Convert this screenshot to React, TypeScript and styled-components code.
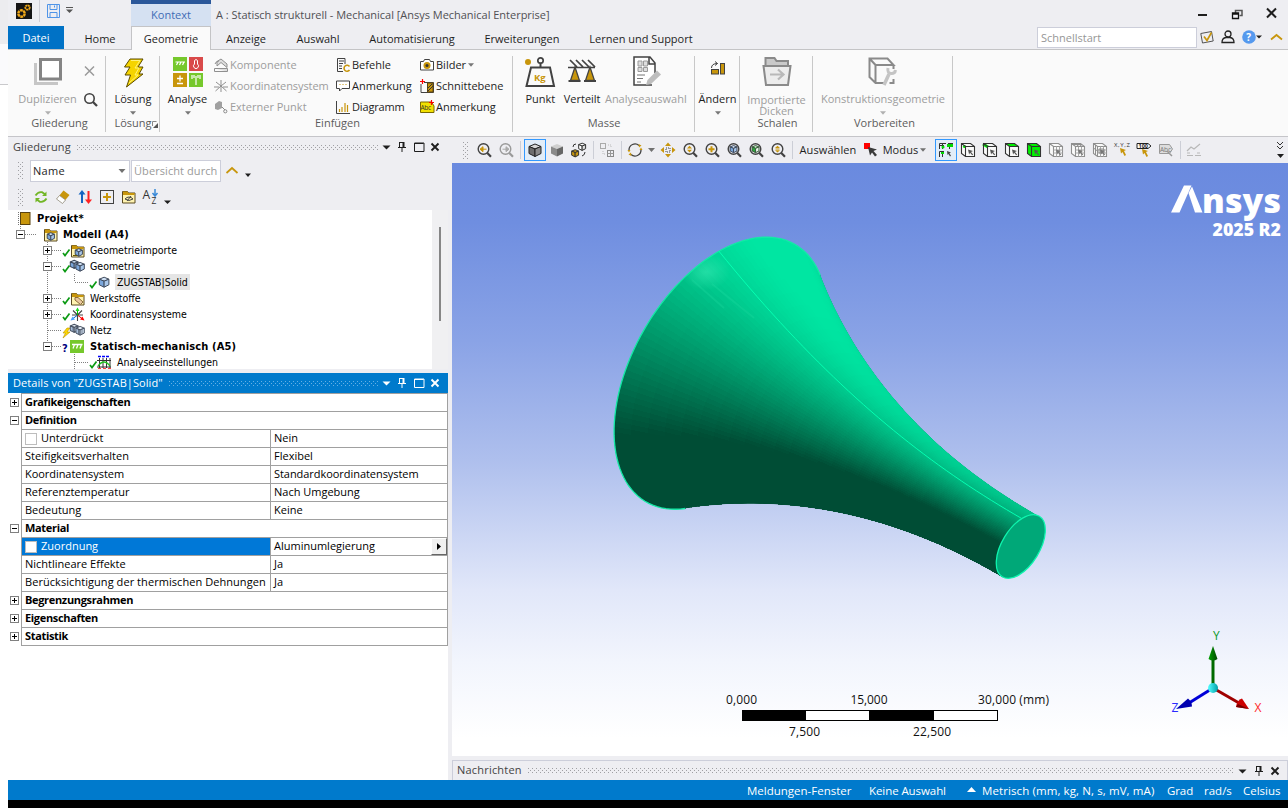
import React from "react";
import styled, { createGlobalStyle, css } from "styled-components";

const Global = createGlobalStyle`
  * { box-sizing: border-box; }
  body { margin: 0; background: #fff; font-family: "Open Sans", "Noto Sans", sans-serif; font-size: 11px; color: #1e1e1e; overflow: hidden; }
  svg { display: block; flex: none; }
`;

/* ---------- frame ---------- */
const Desktop = styled.div`display: flex; width: 1288px; height: 808px;`;
const Edge = styled.div`
  width: 8px; flex: none;
  background: linear-gradient(#ececef 0 44px, #fafafc 44px 84px, #c9c9cc 84px 85px, #fff 85px);
`;
const Window = styled.div`width: 1280px; display: flex; flex-direction: column; background: #eeeef2;`;

/* ---------- title bar ---------- */
const TitleBar = styled.header`display: flex; height: 26px; flex: none; align-items: flex-start;`;
const QuickAccess = styled.div`display: flex; width: 123px; height: 26px; padding: 3px 0 0 8px;`;
const QuickSep = styled.i`width: 1px; height: 22px; margin: -3px 6px 0 7px; background: #cfcfd6;`;
const ContextTab = styled.div`
  width: 80px; height: 26px; border-top: 4px solid #2a579a; background: #d5e1f2;
  color: #3f6cb5; text-align: center; line-height: 22px;
`;
const Caption = styled.div`flex: 1; padding-left: 5px; line-height: 30px; color: #505054; letter-spacing: -0.02px;`;
const WinButtons = styled.div`display: flex; width: 92px; padding: 7px 0 0 1px; gap: 20px;`;

/* ---------- ribbon tabs ---------- */
const TabBar = styled.nav`display: flex; height: 24px; flex: none; border-bottom: 1px solid #c4c4c6;`;
const Tab = styled.div<{ $w: number; $kind?: "file" | "active"; $pl?: number }>`
  width: ${p => p.$w}px; padding-left: ${p => p.$pl ?? 0}px; height: 23px; line-height: 25px; text-align: center; white-space: nowrap;
  ${p => p.$kind === "file" && css`background: #0072c6; color: #fff; line-height: 23px;`}
  ${p => p.$kind === "active" && css`height: 24px; background: #fafafa; border: 1px solid #c4c4c6; border-bottom: 0; line-height: 23px;`}
`;
const QuickLaunch = styled.div`
  display: flex; align-items: center; margin-left: auto; width: 251px; height: 22px; gap: 4px;
`;
const LaunchInput = styled.div`
  width: 160px; height: 21px; border: 1px solid #ccceda; background: #fff; color: #969696; padding-left: 3px; line-height: 19px;
`;
const LaunchIcons = styled.div`display: flex; gap: 7px; margin-left: -1px;`;

/* ---------- ribbon ---------- */
const Ribbon = styled.div`display: flex; height: 86px; flex: none; background: #fafafa; padding: 4px 0 2px;`;
const Group = styled.section<{ $w: number }>`
  width: ${p => p.$w}px; height: 76px; margin-top: 2px; border-right: 1px solid #c8c8c8; display: flex; flex-direction: column;
`;
const GroupBody = styled.div`display: flex; height: 60px; flex: none; align-items: flex-start;`;
const GroupName = styled.div<{ $dx?: number }>`
  flex: 1; text-align: center; line-height: 14px; color: #5c5c5c; white-space: nowrap; padding-left: ${p => p.$dx ?? 0}px;
  display: flex; justify-content: center;
`;
const Big = styled.div<{ $w: number; $off?: boolean; $multi?: boolean }>`
  width: ${p => p.$w}px; display: flex; flex-direction: column; align-items: center; color: ${p => (p.$off ? "#9d9d9d" : "#1e1e1e")};
  text-align: center; white-space: pre; line-height: ${p => (p.$multi ? 11 : 14)}px; padding-left: 1px;
  > svg:first-child { margin-bottom: ${p => (p.$multi ? 6 : 4)}px; }
  > svg + svg { margin-top: 5px; }
`;
const Column = styled.div<{ $w: number }>`width: ${p => p.$w}px; margin-top: -2px; flex: none;`;
const Small = styled.div<{ $off?: boolean; $ls?: number }>`
  height: 21px; display: flex; align-items: center; gap: 2px; white-space: nowrap; color: ${p => (p.$off ? "#9d9d9d" : "#1e1e1e")};
  letter-spacing: ${p => p.$ls ?? 0}px;
`;
const ToolStack = styled.div`width: 16px; display: flex; flex-direction: column; gap: 14px; padding-top: 8px; margin-left: -3px;`;

/* ---------- panels ---------- */
const Work = styled.main`flex: 1; display: flex; gap: 4px; border-top: 1px solid #c5c5c9; min-height: 0;`;
const Left = styled.div`width: 440px; display: flex; flex-direction: column; background: #fff;`;
const Right = styled.div`width: 836px; display: flex; flex-direction: column;`;
const PanelHead = styled.div<{ $active?: boolean; $line?: boolean }>`
  display: flex; align-items: center; height: 20px; flex: none; padding: 0 5px;
  background: ${p => (p.$active ? "#007acc" : "#eeeef2")}; color: ${p => (p.$active ? "#fff" : "#444")};
  ${p => p.$line && css`border: 1px solid #ccceda; border-bottom: 0; padding: 0 4px;`}
`;
const HeadText = styled.span<{ $ls?: number }>`margin-right: 6px; padding-bottom: 2px; white-space: nowrap; letter-spacing: ${p => p.$ls ?? 0}px;`;
const HeadIcons = styled.div`display: flex; gap: 0.3px;`;
const OutlineBar = styled.div<{ $h: number }>`display: flex; align-items: center; height: ${p => p.$h}px; flex: none; background: #eeeef2; padding-left: 10px;`;
const Combo = styled.div`
  display: flex; align-items: center; justify-content: space-between; width: 100px; height: 22px; margin-left: 7px;
  border: 1px solid #ccceda; background: #fff; padding: 0 3px 0 2px; letter-spacing: 0.3px;
`;
const Search = styled.div`
  width: 90px; height: 22px; margin-left: 1px; border: 1px solid #ccceda; background: #fff; color: #9a9a9a;
  line-height: 20px; padding-left: 2px; white-space: nowrap; letter-spacing: 0.08px;
`;
const OutlineIcons = styled.div`display: flex; gap: 6px; margin-left: 10px;`;

/* ---------- outline tree ---------- */
const TreeWrap = styled.div`display: flex; height: 159px; flex: none; background: #f0f0f2; overflow: hidden;`;
const Tree = styled.div`position: relative; width: 424px; background: #fff; font-family: "DejaVu Sans Condensed", "DejaVu Sans", sans-serif; font-stretch: condensed; font-size: 10.5px; color: #000;`;
const TreeLines = styled.svg`position: absolute; left: 0; top: 0;`;
const TreeRow = styled.div<{ $level: number; $bold?: boolean }>`
  position: relative; display: flex; align-items: center; height: 16px; padding-left: ${p => (p.$level ? p.$level * 27 - 19 : 9)}px;
  white-space: nowrap;
  ${p => p.$bold && css`font-weight: 700; font-size: 11px; letter-spacing: 0.16px;`}
`;
const ExpSlot = styled.span`width: 19px; flex: none; padding-top: 1px;`;
const MarkSlot = styled.span`width: 8px; flex: none; padding-top: 5px; font-weight: 700; font-size: 11px; line-height: 11px; color: #00007f;`;
const NodeIcon = styled.span`width: 15px; flex: none;`;
const NodeText = styled.span<{ $sel?: boolean; $bold?: boolean }>`
  margin-left: 3px; padding: ${p => (p.$bold ? 1 : 0)}px 2px 0; line-height: 16px; ${p => p.$sel && css`background: #e5e5e5;`}
`;
const Track = styled.div`width: 16px; padding: 17px 0 0 7px;`;
const Thumb = styled.div`width: 2px; height: 94px; background: #868686;`;
const Gap = styled.div`height: 4px; flex: none; background: #eeeef2;`;

/* ---------- details grid ---------- */
const Grid = styled.div`display: flex; flex-direction: column; color: #000;`;
const GridRow = styled.div`display: flex; height: 18px;`;
const Gutter = styled.div`width: 13px; display: flex; align-items: center; justify-content: center; padding-top: 1px;`;
const Cell = styled.div<{ $w: number; $head?: boolean; $sel?: boolean; $ls?: number }>`
  width: ${p => p.$w}px; height: 19px; border: 1px solid #a0a0a0; margin-right: -1px; flex: none; display: flex; align-items: center;
  padding: 0 0 2px 3px; line-height: 15px; white-space: nowrap; letter-spacing: ${p => p.$ls ?? 0}px;
  ${p => p.$head && css`font-weight: 700; letter-spacing: -0.33px;`}
  ${p => p.$sel && css`background: #0078d7; color: #fff;`}
`;
const Check = styled.i`width: 12px; height: 12px; border: 1px solid #bdbdbd; background: #fff; margin: 2px 4px 0 0;`;
const Flyout = styled.button`
  margin: 2px 0 0 auto; width: 16px; height: 17px; border: 1px solid #fff; border-right-color: #666; border-bottom-color: #666; background: #f0f0f0; padding: 0 0 0 5px;
`;

/* ---------- graphics toolbar ---------- */
const ViewBar = styled.div`display: flex; height: 26px; flex: none; align-items: center; padding-left: 11px; background: #eeeef2;`;
const Tool = styled.div<{ $on?: boolean }>`
  width: 22px; height: 22px; display: grid; place-items: center; ${p => p.$on && css`border: 1px solid #3399ff; background: #e2edf8;`}
`;
const Sep = styled.i<{ $w?: number }>`width: ${p => p.$w ?? 6}px; height: 18px; background: linear-gradient(#ccced6, #ccced6) 3px 0 / 1px 100% no-repeat;`;
const BarText = styled.span<{ $w: number }>`width: ${p => p.$w}px; text-align: center; white-space: nowrap; letter-spacing: 0.1px; padding-bottom: 1px;`;
const Overflow = styled.div`margin-left: auto; width: 16px; display: flex; flex-direction: column; align-items: center; gap: 4px;`;
const Space = styled.i<{ $w: number }>`width: ${p => p.$w}px; flex: none;`;
const Viewport = styled.div`
  height: 593px; flex: none;
  background: linear-gradient(#6a8adf 0, #6f8ee0 10%, #8aa3e6 30%, #aebfed 50%, #e1e7f9 72%, #f2f5fd 84%, #fff 97%);
`;

/* ---------- status bar ---------- */
const Status = styled.footer`display: flex; align-items: center; justify-content: flex-end; height: 20px; flex: none; background: #007acc; color: #fff; padding: 0 8px 0 0; font-size: 11.5px;`;
const StatusItem = styled.span<{ $w: number; $ml: number; $ls?: number }>`width: ${p => p.$w}px; margin-left: ${p => p.$ml}px; white-space: nowrap; letter-spacing: ${p => p.$ls ?? 0}px;`;
const Bottom = styled.div`height: 8px; flex: none; background: #000;`;

/* ---------- shared drawings ---------- */
const Down = ({ c = "#1e1e1e", w = 7 }: { c?: string; w?: number }) => (
  <svg width={w} height="4" viewBox="0 0 7 4"><path d="M0 0h7L3.500 4z" fill={c} /></svg>
);
const DotStrip = styled.svg<{ $grow: boolean }>`${p => p.$grow && css`flex: 1;`}`;
const Dots = ({ w, h = 5, c = "#a0a0a4" }: { w?: number; h?: number; c?: string }) => {
  const id = React.useId();
  return (
    <DotStrip $grow={!w} width={w ?? "100%"} height={h} shapeRendering="crispEdges">
      <defs><pattern id={id} width="4" height="4" patternUnits="userSpaceOnUse">
        <rect width="1" height="1" fill={c} /><rect x="2" y="2" width="1" height="1" fill={c} />
      </pattern></defs>
      <rect width="100%" height={h} fill={`url(#${id})`} />
    </DotStrip>
  );
};
const Svg = ({ s = 16, w, h, children }: { s?: number; w?: number; h?: number; children: React.ReactNode }) => (
  <svg width={w ?? s} height={h ?? s} viewBox={`0 0 ${w ?? s} ${h ?? s}`} fill="none" overflow="visible">{children}</svg>
);
const GOLD = "#c8960c";
const INK = "#424242";

const PanelButtons = ({ c, square = true }: { c: string; square?: boolean }) => (
  <HeadIcons>
    <Svg><path d="M4.500 6.500h8l-4 4z" fill={c} /></Svg>
    <Svg><path d="M5.500 3v5.500M5 3.500h5M4 8.500h8M8 9v4" stroke={c} /><path d="M9.500 3v5.500" stroke={c} strokeWidth="2" /></Svg>
    {square && <Svg><path d="M3.500 4h9.500v8.500H3.500zM3.500 4.500h9" stroke={c} /></Svg>}
    <Svg><path d="M4.500 4.500l7 7M11.500 4.500l-7 7" stroke={c} strokeWidth="1.900" /></Svg>
  </HeadIcons>
);

const Box3 = ({ top, left, right, stroke, x = 0, y = 0, k = 1 }: { top: string; left: string; right: string; stroke: string; x?: number; y?: number; k?: number }) => (
  <g transform={`translate(${x} ${y}) scale(${k})`} stroke={stroke} strokeLinejoin="round" strokeWidth={1 / k}>
    <path d="M2 4.500L8 2l6 2.500-6 2.500z" fill={top} /><path d="M2 4.500L8 7v7.500L2 11.500z" fill={left} /><path d="M14 4.500L8 7v7.500l6-3z" fill={right} />
  </g>
);
const BlueBox = ({ x = 0, y = 0, k = 1 }) => <Box3 top="#cfe0f4" left="#7ba7dc" right="#a9c7ea" stroke="#3f4a5c" x={x} y={y} k={k} />;
const FolderBase = () => (
  <g><path d="M1.500 2.500h5l1 1.500h6.500v10h-12.500z" fill="#fff3b0" stroke="#5a4a20" /><path d="M2 2.500h4.500l1 1.500h6v2H2z" fill={GOLD} /></g>
);

const Magnifier = ({ c = INK, children }: { c?: string; children?: React.ReactNode }) => (
  <Svg><g transform="translate(.5 .2)"><circle cx="7" cy="6.800" r="5.300" stroke={c} strokeWidth="1.400" /><path d="M10.800 10.800l3.700 3.700" stroke={c} strokeWidth="2.200" />{children}</g></Svg>
);

const SelectCube = ({ face, mesh, off }: { face?: "dot" | "edge" | "top" | "all"; mesh?: number; off?: boolean }) => {
  const c = off ? "#8f8f8f" : "#333";
  const g = "#00f000";
  return (
    <Svg>
      <path d="M1.500 1.500h9l4 3v10h-9l-4-3z" fill={face === "all" ? g : "#fafafa"} />
      {face === "top" && <path d="M1.500 1.500h9l4 3h-9z" fill={g} />}
      {face === "edge" && <path d="M1 2l5 3" stroke={g} strokeWidth="3" />}
      {face === "dot" && <circle cx="4.500" cy="4.500" r="1.600" fill={g} />}
      <path d="M1.500 1.500h9l4 3v10h-9l-4-3zM1.500 1.500l4 3h9M5.500 4.500v10" stroke={c} strokeWidth="1.100" />
      {off && <path d="M8.500 4.500v10M11.500 4.500v10M5.500 8h9M5.500 11h9" stroke="#a8a8a8" />}
      {mesh === 2 && <path d="M3 2.500h9M5 1.500l4 3M8 1.500l4 3" stroke={c} />}
      {mesh === 3 && <path d="M3.500 3v10M1.500 6l4 3M7 7h5v4H7z" stroke={c} />}
      <path d="M8 7.500l5 1.500-2 1 2.200 2.500-1 .8-2.100-2.500-1 1.700z" fill={off ? "#777" : "#555"} />
    </Svg>
  );
};

const Expander = ({ open, c = "#808080" }: { open?: boolean; c?: string }) => (
  <Svg s={9}><rect x=".5" y=".5" width="8" height="8" fill="#fff" stroke={c} /><path d={open ? "M2 4.500h5" : "M2 4.500h5M4.500 2v5"} stroke="#000" /></Svg>
);
const Tick = () => <Svg w={9} h={9}><path d="M1 5l2 2.500L7.500 1.500" stroke="#0c9a14" strokeWidth="1.700" /></Svg>;
const Bolt = () => <Svg w={9} h={10}><path d="M5 0L1 5h2.500L1 10l7-6H5l3-4z" fill="#ffd800" stroke="#b89000" strokeWidth=".6" /></Svg>;

/* ---------- tree icons ---------- */
const treeIcons: Record<string, React.ReactNode> = {
  project: <Svg w={15} h={15}><rect x="3.500" y="1.500" width="9.500" height="12" fill={GOLD} stroke="#5a4310" /><path d="M1.500 1v13" stroke="#777" strokeDasharray="1 1" /></Svg>,
  model: <Svg w={15} h={15}><FolderBase /><BlueBox x={3} y={4.500} k={0.600} /></Svg>,
  imports: <Svg w={15} h={15}><FolderBase /><BlueBox x={4} y={4.500} k={0.600} /><path d="M3 12.500h4" stroke="#6a5a00" /></Svg>,
  geometry: <Svg w={15} h={15}><BlueBox x={-1} y={0} k={0.650} /><BlueBox x={4.500} y={2} k={0.700} /></Svg>,
  solid: <Svg w={15} h={15}><BlueBox x={0.700} y={0.600} k={0.800} /></Svg>,
  material: <Svg w={15} h={15}><FolderBase /><path d="M5 6.500h3l5 4.500-2.500 2.500L5 9z" fill="#eac9a0" stroke="#8a6a3a" /></Svg>,
  csys: (
    <Svg w={15} h={15}>
      <path d="M7.500 8L3 3.500M7.500 8L12 3.500M7.500 8v6M7.500 8H2M7.500 8H13" stroke="#444" strokeWidth="1.100" />
      <path d="M7.500 8V3" stroke="#0b0" /><path d="M5.500 4h4l-2-3.500z" fill="#1fdd1f" />
      <path d="M8 8.500l4 3" stroke="#e00" /><path d="M10 12.500l4.500 1-2-4z" fill="#f00" />
      <path d="M7 8.500l-4 3" stroke="#06c" /><path d="M5 12.500l-4.500 1 2-4z" fill="#4aa3ff" />
    </Svg>
  ),
  mesh: <Svg w={15} h={15}><Box3 top="#e6eef8" left="#a9c0dd" right="#d0dff0" stroke="#4a5464" x={-1} y={0} k={0.650} /><Box3 top="#e6eef8" left="#a9c0dd" right="#d0dff0" stroke="#4a5464" x={4.500} y={2} k={0.700} /><path d="M3 3v5M8.500 6v5M12 6v5" stroke="#4a5464" strokeWidth=".7" /></Svg>,
  static: <Svg w={15} h={15}><rect x="0" y="1" width="14" height="13" fill="#76c82c" /><path d="M2 5.500h10.500M4.500 5.500L3 9.500M8 5.500L6.500 9.500M11.500 5.500L10 9.500" stroke="#fff" strokeWidth="1.300" /></Svg>,
  settings: <Svg w={15} h={15}><path d="M2.500 3v10M6 3v10M9.500 3v10M13 3v10M0 5.500h14M0 12h14" stroke="#333" /><path d="M1 1.500h3M5 1.500h3M9 1.500h3" stroke="#00f" strokeWidth="1.500" /><path d="M1 14h3M6 14h3M11 14h3" stroke="red" strokeWidth="1.500" /><path d="M1 11q6-8 12 0" stroke="#1fc01f" strokeWidth="1.300" /></Svg>,
};
type Node = { t: string; l: number; i: string; e?: "open" | "shut"; m?: React.ReactNode; b?: boolean; s?: boolean };
const nodes: Node[] = [
  { t: "Projekt*", l: 0, i: "project", b: true },
  { t: "Modell (A4)", l: 1, i: "model", e: "open", b: true },
  { t: "Geometrieimporte", l: 2, i: "imports", e: "shut", m: <Tick /> },
  { t: "Geometrie", l: 2, i: "geometry", e: "open", m: <Tick /> },
  { t: "ZUGSTAB|Solid", l: 3, i: "solid", m: <Tick />, s: true },
  { t: "Werkstoffe", l: 2, i: "material", e: "shut", m: <Tick /> },
  { t: "Koordinatensysteme", l: 2, i: "csys", e: "shut", m: <Tick /> },
  { t: "Netz", l: 2, i: "mesh", m: <Bolt /> },
  { t: "Statisch-mechanisch (A5)", l: 2, i: "static", e: "open", m: "?", b: true },
  { t: "Analyseeinstellungen", l: 3, i: "settings", m: <Tick /> },
];

/* ---------- details data ---------- */
type Detail = { h?: string; open?: boolean; k?: string; v?: string; box?: boolean; sel?: boolean; ls?: number };
const details: Detail[] = [
  { h: "Grafikeigenschaften" },
  { h: "Definition", open: true },
  { k: "Unterdrückt", v: "Nein", box: true },
  { k: "Steifigkeitsverhalten", v: "Flexibel" },
  { k: "Koordinatensystem", v: "Standardkoordinatensystem", ls: -0.05 },
  { k: "Referenztemperatur", v: "Nach Umgebung" },
  { k: "Bedeutung", v: "Keine" },
  { h: "Material", open: true },
  { k: "Zuordnung", v: "Aluminumlegierung", box: true, sel: true },
  { k: "Nichtlineare Effekte", v: "Ja" },
  { k: "Berücksichtigung der thermischen Dehnungen", v: "Ja", ls: 0.06 },
  { h: "Begrenzungsrahmen" },
  { h: "Eigenschaften" },
  { h: "Statistik" },
];

/* ---------- solid body: flared round bar seen at an angle ---------- */
type P = [number, number];
const LEN = 349.5;
const AXIS: P = [0.8656, 0.5007];
const NORMAL: P = [0.5007, -0.8656];
const radius = (t: number) => 35.5 + 113.2 * Math.pow(1 - t, 2.2);
const slope = (t: number) => 0.7126 * Math.pow(1 - t, 1.2);
const squash = (t: number) => 0.592 - 0.062 * t;
const at = (t: number, a: number): P => {
  const r = radius(t);
  const u = 3 * (1 - t) + t * LEN + r * squash(t) * Math.sin(a), v = r * Math.cos(a);
  return [718 + u * AXIS[0] + v * NORMAL[0], 371.7 + u * AXIS[1] + v * NORMAL[1]];
};
const contact = (t: number) => Math.asin(squash(t) * slope(t));
const line = (pts: P[]) => pts.map(p => `${p[0].toFixed(2)} ${p[1].toFixed(2)}`).join("L");
const steps = (n: number) => Array.from({ length: n + 1 }, (_, i) => i / n);
const c0 = contact(0);
const rim = steps(80).map(f => at(0, -Math.PI - c0 + f * (Math.PI + 2 * c0)));
const upper = steps(50).map(t => at(t, contact(t)));
const lower = steps(50).map(t => at(1 - t, Math.PI - contact(1 - t)));
const seam = steps(40).map(t => at(t, -0.789));
const outline = "M" + line([...rim, ...upper, ...lower]) + "z";

const facets = (() => {
  const NT = 28, NA = 96, a0 = 0.5, a1 = -Math.PI - 0.5;
  const out: { d: string; c: string; k: number }[] = [];
  for (let j = 0; j < NA; j++) {
    const a = a0 + ((a1 - a0) * j) / NA, b = a0 + ((a1 - a0) * (j + 1)) / NA, m = (a + b) / 2;
    for (let i = 0; i < NT; i++) {
      const t = i === 0 ? -0.02 : i / NT, t2 = (i + 1) / NT, tm = (i + 0.5) / NT;
      const q = 0.848 * 0.727 * Math.pow(1 - tm, 1.2);
      const dot = (0.72 * Math.cos(m) - 0.14 * Math.sin(m) + 0.68 * q) / Math.sqrt(1 + q * q);
      const s = Math.max(0, Math.min(1, dot * 1.05));
      out.push({
        d: "M" + line([at(t, a), at(t2, a), at(t2, b), at(t, b)]) + "z",
        c: `rgb(0,${Math.round(77 + 153 * s)},${Math.round(53 + 109 * s)})`,
        k: Math.abs(m + Math.PI / 2),
      });
    }
  }
  return out.sort((x, y) => y.k - x.k);
})();

const Scene = () => (
  <svg width="836" height="593" viewBox="452 163 836 593" fontFamily='"Open Sans", "Noto Sans", sans-serif'>
    <defs>
      <clipPath id="body"><path d={outline} /></clipPath>
      <radialGradient id="glow"><stop offset="0" stopColor="#5ffccb" stopOpacity=".35" /><stop offset="1" stopColor="#5ffccb" stopOpacity="0" /></radialGradient>
      <linearGradient id="ball"><stop offset="0" stopColor="#5ff" /><stop offset="1" stopColor="#00a0a8" /></linearGradient>
      <linearGradient id="ygrad"><stop offset="0" stopColor="#00a000" /><stop offset="1" stopColor="#004800" /></linearGradient>
    </defs>
    <g clipPath="url(#body)">
      <path d={outline} fill="#004d35" />
      <path d={"M" + line([...upper, ...[...seam].reverse()]) + "z"} fill="#00c48c" stroke="#00c48c" strokeWidth="4" />
      <g shapeRendering="crispEdges">{facets.map((f, i) => <path key={i} d={f.d} fill={f.c} />)}</g>
      <ellipse cx="706" cy="272" rx="24" ry="18" fill="url(#glow)" />
      <path d="M692 280l32 28M712 284l42 34" stroke="#3df0b8" strokeOpacity=".14" strokeWidth="2" />
    </g>
    <path d={"M" + line(rim)} fill="none" stroke="#14eaa6" strokeWidth="1.300" />
    <path d={"M" + line(seam)} fill="none" stroke="#05ffb2" strokeWidth="1" />
    <ellipse cx="1020.800" cy="546.500" rx="35.500" ry="18.800" transform="rotate(-58.5 1020.8 546.5)" fill="#00a878" stroke="#0ef5ae" strokeWidth="1.300" />

    <path d="M1171 212.500L1184 185.500h7.500L1179.500 212.500z" fill="#fff" />
    <path d="M1188.500 193L1192 186.500l10.500 26h-7.500z" fill="#fff" />
    <text x="1202" y="212.500" fontSize="34" fontWeight="800" fill="#fff" textLength="79">nsys</text>
    <text x="1212.500" y="236" fontSize="17" fontWeight="800" fill="#fff" textLength="68.500" lengthAdjust="spacingAndGlyphs">2025 R2</text>

    <g fontSize="12" fill="#111">
      <text x="726" y="704" textLength="31">0,000</text><text x="850.500" y="704" textLength="37">15,000</text><text x="978" y="704" textLength="71">30,000 (mm)</text>
      <text x="789" y="736" textLength="31">7,500</text><text x="913" y="736" textLength="38">22,500</text>
    </g>
    <rect x="742.500" y="710.500" width="255" height="10" fill="#fff" stroke="#000" />
    <rect x="742" y="710" width="64" height="11" /><rect x="869" y="710" width="65" height="11" />

    <path d="M1213 688V656" stroke="#006a00" strokeWidth="3" /><path d="M1208.500 659L1213 646l4.500 13q-4.500 3-9 0z" fill="url(#ygrad)" />
    <path d="M1213 688l26 15" stroke="#a00000" strokeWidth="3" /><path d="M1249 709l-13-2q1-7 6-8.500z" fill="#c00" /><path d="M1249 709l-13-2 2-3z" fill="#700" />
    <path d="M1213 688l-24 15" stroke="#0000d8" strokeWidth="3" /><path d="M1176 709l12-10.500q4 3 4 8z" fill="#0000b0" />
    <circle cx="1213" cy="688" r="5" fill="url(#ball)" />
    <text x="1213" y="640" fontSize="12" fill="#0a9a2a">Y</text><text x="1254.500" y="712" fontSize="12" fill="#ff2a2a">X</text><text x="1171.500" y="712" fontSize="12" fill="#2a2aff">Z</text>
  </svg>
);

/* ---------- ribbon icons ---------- */
const LaunchBolt = () => (
  <Svg w={32} h={32}><path d="M13 3h13l-5 8h5l-4 7h4L9.500 31l4-12H8l5-8H7.500z" fill="#f5d400" stroke="#5a4a00" strokeWidth="1" /><path d="M14 4.500h9l-5 7.500h4l-4 7h3l-9 8" stroke="#fff27a" /></Svg>
);
const DuplicateIcon = () => (
  <Svg w={32} h={32}><path d="M3.500 7v20.500H26" stroke="#c6c6c6" strokeWidth="3" /><rect x="8.500" y="3.500" width="20" height="19.500" fill="#fff" stroke="#848484" strokeWidth="3" /></Svg>
);
const AnalysisIcon = () => (
  <Svg w={32} h={32}>
    <rect x="1" y="1" width="14" height="14" fill="#76c82c" /><path d="M3.500 6h9.500M6 6l-1.500 3M9 6l-1.500 3M12 6l-1.500 3" stroke="#fff" strokeWidth="1.200" />
    <rect x="17" y="1" width="14" height="14" fill="#d94a4a" /><path d="M22.500 8V4.500q1.500-2 3 0V8a2.500 2.500 0 1 1-3 0z" stroke="#fff" />
    <rect x="1" y="17" width="14" height="14" fill={GOLD} /><path d="M8 19.500v6M5 22.500h6M5 27.500h6" stroke="#fff" strokeWidth="1.300" />
    <rect x="17" y="17" width="14" height="14" fill="#76c82c" /><path d="M24 20v9M20 19v4M22 19v3M26 19v3M28 19v4" stroke="#fff" strokeWidth="1.200" />
  </Svg>
);
const PointMass = () => (
  <Svg w={32} h={32}><circle cx="4" cy="6" r="3" fill={GOLD} /><circle cx="16.500" cy="4.500" r="2.700" stroke={INK} strokeWidth="1.700" /><path d="M16.500 7v4M7 11.500h19L30 30H2.500z" stroke={INK} strokeWidth="2" /><text x="10" y="24.500" fontSize="9.500" fontWeight="700" fill={GOLD}>Kg</text></Svg>
);
const Distributed = () => (
  <Svg w={32} h={32}><path d="M2 11.500h27M4 4l7 7M10 4l7 7M16 4l7 7M22 4l7 7" stroke={INK} strokeWidth="1.700" /><path d="M9 11L4.500 24.500h9zM24 11L19.500 24.500h9z" fill={GOLD} stroke={INK} strokeWidth="1.300" /><path d="M2.500 25h12M18 25h12" stroke={INK} strokeWidth="1.800" /></Svg>
);
const SelectionDoc = () => (
  <Svg w={32} h={32}><path d="M22 29H4V1h16l5 6v10M19 1v7h6" stroke={INK} strokeWidth="1.500" fill="#fff" /><path d="M8 5h4v5H8zM13.500 5h4v5h-4zM8 11.500h4v4H8zM13.500 11.500h4v4h-4z" stroke="#9a9a9a" fill="#ddd" /><path d="M7 19h8M7 22.500h6M7 26h4" stroke="#777" /><path d="M16 29l1.500-5L27 14.500l4 4L21 28z" fill="#bdbdbd" /></Svg>
);
const EditIcon = () => (
  <Svg w={32} h={32}><rect x="9.500" y="13.500" width="7" height="4.500" fill={GOLD} stroke={INK} /><rect x="18.500" y="7.500" width="4" height="10.500" fill={GOLD} stroke={INK} /><path d="M9.500 12q0-4.500 6-4.500M13 5.500l2.500 2-2.500 2" stroke={INK} /></Svg>
);
const ImportFolder = () => (
  <Svg w={32} h={32}><path d="M4.500 9V2h9l2 3H27v4" stroke="#8a8a8a" strokeWidth="2" fill="#c9c9c9" /><path d="M2.500 10h27L27 29H5z" stroke="#8a8a8a" strokeWidth="2" fill="#ececec" /><path d="M9 18.500h13M17 13.500l5.500 5-5.500 5" stroke="#b8b8b8" strokeWidth="2.200" /></Svg>
);
const ConstructIcon = () => (
  <Svg w={32} h={32}><path d="M17 27H8.500L2.500 21V2.500h18l6 6.500H8.500M2.500 2.500l6 6.500V26.500M26.500 9V13M26.500 23v4h-4" stroke="#8a8a8a" strokeWidth="2" /><path d="M17 29l5-11" stroke="#c4c4c4" strokeWidth="3.500" /><path d="M21 12q-1 5 3 5.500t4.500-3.500" stroke="#c4c4c4" strokeWidth="3" /></Svg>
);

const App = () => (
  <Desktop>
    <Global />
    <Edge />
    <Window>
      <TitleBar>
        <QuickAccess>
          <Svg w={16} h={16}><rect width="16" height="16" fill="#151515" /><circle cx="5.500" cy="10.500" r="3.200" stroke="#f0a818" strokeWidth="2.400" strokeDasharray="2.8 .5" /><circle cx="11.500" cy="4.500" r="2.200" stroke="#f0a818" strokeWidth="1.800" strokeDasharray="2 .4" /></Svg>
          <QuickSep />
          <Svg w={16} h={16}><path d="M1.500 1.500h12v13h-12zM4 1.500v5h7v-5M4 14.500V9.500h7v5M8.500 2.500v2" stroke="#4f94e8" /></Svg>
          <Space $w={4} />
          <Svg w={9} h={16}><path d="M0 4.500h7" stroke="#555" /><path d="M0 6.500h7L3.500 10z" fill="#555" /></Svg>
        </QuickAccess>
        <ContextTab>Kontext</ContextTab>
        <Caption>A : Statisch strukturell - Mechanical [Ansys Mechanical Enterprise]</Caption>
        <WinButtons>
          <Svg s={14}><path d="M1 8h9" stroke="#1e1e1e" strokeWidth="2" /></Svg>
          <Svg s={14}><path d="M4.500 6V3.500h6.500v5H8.500" stroke="#555" strokeWidth="1.500" /><path d="M1.500 6h6v5.500h-6zM1.500 7h6" stroke="#111" strokeWidth="1.300" /></Svg>
          <Svg s={14}><path d="M2 1.500l9 9M11 1.500l-9 9" stroke="#1e1e1e" strokeWidth="2" /></Svg>
        </WinButtons>
      </TitleBar>

      <TabBar>
        <Tab $w={56} $kind="file">Datei</Tab>
        <Tab $w={67} $pl={5}>Home</Tab>
        <Tab $w={80} $kind="active">Geometrie</Tab>
        <Tab $w={70}>Anzeige</Tab>
        <Tab $w={74}>Auswahl</Tab>
        <Tab $w={114}>Automatisierung</Tab>
        <Tab $w={106}>Erweiterungen</Tab>
        <Tab $w={132}>Lernen und Support</Tab>
        <QuickLaunch>
          <LaunchInput>Schnellstart</LaunchInput>
          <LaunchIcons>
            <Svg s={14}><path d="M.8 3.500L11.500 1.500 13.200 11 2.500 13z" stroke="#555" /><path d="M4 6.500l3 4 4.500-8" stroke={GOLD} strokeWidth="1.700" /></Svg>
            <Svg s={14}><circle cx="7" cy="4" r="3" stroke="#222" strokeWidth="1.300" /><path d="M1 12.500Q1 8 5 7.500h4q4 .5 4 5z" stroke="#222" strokeWidth="1.300" /></Svg>
            <Svg w={20} h={14}><circle cx="7" cy="7" r="6.800" fill="#5599ee" /><text x="4.300" y="10.800" fontSize="10" fontWeight="700" fill="#fff">?</text><path d="M14 5.500h6l-3 3z" fill="#222" /></Svg>
            <Svg w={14} h={14}><path d="M2 9.500L7.500 5l5.500 4.500" stroke={GOLD} strokeWidth="1.800" /></Svg>
          </LaunchIcons>
        </QuickLaunch>
      </TabBar>

      <Ribbon>
        <Group $w={98}>
          <GroupBody>
            <Big $w={78} $off><DuplicateIcon />Duplizieren<Down c="#b0b0b0" w={6} /></Big>
            <ToolStack>
              <Svg s={14}><path d="M2 2.500l9 9M11 2.500l-9 9" stroke="#9a9a9a" strokeWidth="1.500" /></Svg>
              <Svg s={15}><circle cx="6.500" cy="6.500" r="4.700" stroke={INK} strokeWidth="1.600" /><path d="M10 10l4 4" stroke={INK} strokeWidth="2.300" /></Svg>
            </ToolStack>
          </GroupBody>
          <GroupName $dx={6}>Gliederung</GroupName>
        </Group>
        <Group $w={54}>
          <GroupBody><Big $w={54}><LaunchBolt />Lösung<Down c="#777" w={6} /></Big></GroupBody>
          <GroupName $dx={7}>Lösung<Svg w={6} h={12}><path d="M.5 10V5.500h4" stroke="#888" /><path d="M6 7v5H1z" fill="#555" /></Svg></GroupName>
        </Group>
        <Group $w={353}>
          <GroupBody>
            <Big $w={54}><AnalysisIcon />Analyse<Down c="#777" w={6} /></Big>
            <Column $w={122}>
              <Small $off><Svg s={14}><path d="M.5 13.500h13M.5 10.500h13v3M.5 10.500v3M3 8V3.500L7 1l6 5v3.500l-6-5zM1 6q1-3 4-3" stroke="#8f8f8f" fill="#ddd" /></Svg>Komponente</Small>
              <Small $off $ls={-0.08}><Svg s={14}><path d="M7 7V1M7 7v6M7 7L2 3M7 7l5-4M7 7L1.500 12M7 7l5.500 5M0 8h5M9 8h5" stroke="#8f8f8f" /></Svg>Koordinatensystem</Small>
              <Small $off><Svg s={14}><path d="M1 4l4-3 3 1v6l-4 2-3-1z" fill="#a0a0a0" /><path d="M8 7l3 3" stroke="#888" /><circle cx="11.300" cy="11.300" r="1.600" stroke="#888" /></Svg>Externer Punkt</Small>
            </Column>
            <Column $w={84}>
              <Small><Svg s={14}><path d="M7 13.500H1.500V.5H9V6M3 3h5M3 5.500h4M3 8h3M3 10.500h3" stroke={INK} /><path d="M13.500 8.500a3 3 0 1 0 0 3.500" stroke={GOLD} strokeWidth="1.600" /></Svg>Befehle</Small>
              <Small><Svg s={14}><path d="M.5 2h13v7.500H6L3.500 12V9.500h-3z" stroke={INK} fill="#fff" /><path d="M3.500 5.500h1M6.500 5.500h1M9.500 5.500h1" stroke={GOLD} /></Svg>Anmerkung</Small>
              <Small $ls={-0.15}><Svg s={14}><path d="M.5 1v12.500H14" stroke={INK} /><path d="M3.500 12V9M6 12V7M9 12V3M11.500 12V5" stroke={GOLD} strokeWidth="1.200" /></Svg>Diagramm</Small>
            </Column>
            <Column $w={92}>
              <Small><Svg s={14}><path d="M.5 3.500h3l1-2h5l1 2h3v8.500H.5z" stroke={INK} fill="#fff" /><circle cx="7" cy="7.500" r="3.500" fill={GOLD} /><circle cx="7" cy="7.500" r="1.500" fill="#333" /></Svg>Bilder<Down c="#777" w={6} /></Small>
              <Small><Svg s={14}><path d="M1 5v8.500h6M4 3.500h9.500v10H7" stroke={INK} /><rect x="7.500" y="4" width="5.500" height="9" fill={GOLD} stroke="#5a4310" /><path d="M8 9l4-4M8 12l5-5" stroke="#333" /><path d="M2.500 0v5M0 2.500h5" stroke="red" strokeWidth="1.200" /></Svg>Schnittebene</Small>
              <Small><Svg s={14}><path d="M.5 2h11l2.500 4v6.500H.5z" fill="#f2e000" stroke="#7a6a00" /><text x=".5" y="9.500" fontSize="6.500" letterSpacing="-.3" fill="#333">Abc</text><path d="M11.500 0v5M9 2.500h5" stroke="red" strokeWidth="1.200" /></Svg>Anmerkung</Small>
            </Column>
          </GroupBody>
          <GroupName $dx={3}>Einfügen</GroupName>
        </Group>
        <Group $w={182}>
          <GroupBody>
            <Big $w={54}><PointMass />Punkt</Big>
            <Big $w={30}><Distributed />Verteilt</Big>
            <Big $w={98} $off><SelectionDoc />Analyseauswahl</Big>
          </GroupBody>
          <GroupName $dx={1}>Masse</GroupName>
        </Group>
        <Group $w={45}>
          <GroupBody><Big $w={45}><EditIcon />Ändern<Down c="#777" w={6} /></Big></GroupBody>
        </Group>
        <Group $w={73}>
          <GroupBody><Big $w={73} $off $multi><ImportFolder />{"Importierte\nDicken"}</Big></GroupBody>
          <GroupName $dx={3}>Schalen</GroupName>
        </Group>
        <Group $w={140}>
          <GroupBody><Big $w={140} $off><ConstructIcon />Konstruktionsgeometrie<Down c="#b0b0b0" w={6} /></Big></GroupBody>
          <GroupName $dx={4}>Vorbereiten</GroupName>
        </Group>
      </Ribbon>

      <Work>
        <Left>
          <PanelHead><HeadText $ls={0.12}>Gliederung</HeadText><Dots /><PanelButtons c="#1e1e1e" /></PanelHead>
          <OutlineBar $h={27}>
            <Dots w={5} h={17} />
            <Combo>Name<Down c="#717171" w={8} /></Combo>
            <Search>Übersicht durch</Search>
            <Space $w={4} />
            <Svg w={14} h={14}><path d="M1.500 9L7 4l5.500 5" stroke={GOLD} strokeWidth="1.700" /></Svg>
            <Space $w={6} />
            <Svg w={7} h={14}><path d="M0 9.500h6l-3 3.500z" fill="#1e1e1e" /></Svg>
          </OutlineBar>
          <OutlineBar $h={26}>
            <Dots w={5} h={17} />
            <OutlineIcons>
              <Svg><path d="M2.500 6.500Q5 2.500 9 3.200l3 2M13.500 9.500Q11 13.500 7 12.800l-3-2" stroke="#72b626" strokeWidth="1.800" /><path d="M13.500 2.500v4.500H9zM2.500 13.500V9H7z" fill="#72b626" /></Svg>
              <Svg><path d="M1.500 10L8.500 1.500l6 4.500-7 8.500z" fill={GOLD} /><path d="M1.500 10l3-3.500 6 4.500-3 3.500z" fill="#fff" stroke="#888" strokeWidth=".7" /></Svg>
              <Svg><path d="M5 14V4" stroke="#1565c0" strokeWidth="2" /><path d="M1.500 5.500L5 1l3.500 4.500z" fill="#1565c0" /><path d="M11.500 2v10" stroke="#f22" strokeWidth="2" /><path d="M8 10.500l3.500 4.500 3.500-4.500z" fill="#f22" /></Svg>
              <Svg><rect x="1.500" y="1.500" width="13" height="13" stroke={INK} /><path d="M8 4v8M4 8h8" stroke={GOLD} strokeWidth="2" /></Svg>
              <Svg><FolderBase /><path d="M4 10q4-4 8 0-4 3-8 0M6 12l4-5" stroke="#444" /></Svg>
              <Svg><text x="-.5" y="9.500" fontSize="12" fill="#333">A</text><text x="8.500" y="15" fontSize="8.500" fill="#333">Z</text><path d="M12 0v6M9.500 4L12 7l2.500-3" stroke="#3a8ad8" strokeWidth="1.500" /></Svg>
            </OutlineIcons>
            <Space $w={5} />
            <Svg w={7} h={16}><path d="M0 11.500h7l-3.500 3.500z" fill="#1e1e1e" /></Svg>
          </OutlineBar>
          <TreeWrap>
            <Tree>
              <TreeLines width="120" height="159" stroke="#808080" strokeDasharray="1 1" shapeRendering="crispEdges">
                <path d="M12.500 16v5M17 24.500h11M39.500 32v105M44 40.500h10M44 56.500h10M44 88.500h10M44 104.500h10M40 120.500h14M44 136.500h10M66.500 64v8M67 72.500h14M66.500 142v17M67 152.500h14" />
              </TreeLines>
              {nodes.map(n => (
                <TreeRow key={n.t} $level={n.l} $bold={n.b}>
                  {n.l > 0 && <ExpSlot>{n.e && <Expander open={n.e === "open"} />}</ExpSlot>}
                  {n.l > 0 && <MarkSlot>{n.m}</MarkSlot>}
                  <NodeIcon>{treeIcons[n.i]}</NodeIcon>
                  <NodeText $sel={n.s} $bold={n.b}>{n.t}</NodeText>
                </TreeRow>
              ))}
            </Tree>
            <Track><Thumb /></Track>
          </TreeWrap>
          <Gap />
          <PanelHead $active><HeadText $ls={0.07}>Details von "ZUGSTAB|Solid"</HeadText><Dots c="#66b0e4" /><PanelButtons c="#fff" /></PanelHead>
          <Grid>
            {details.map(r => (
              <GridRow key={r.h ?? r.k}>
                <Gutter>{r.h && <Expander open={r.open} />}</Gutter>
                {r.h ? (
                  <Cell $w={427} $head>{r.h}</Cell>
                ) : (
                  <>
                    <Cell $w={250} $sel={r.sel} $ls={r.ls}>{r.box && <Check />}{r.k}</Cell>
                    <Cell $w={178} $ls={r.ls}>{r.v}{r.sel && <Flyout><Svg w={5} h={7}><path d="M0 0v7l4-3.500z" fill="#000" /></Svg></Flyout>}</Cell>
                  </>
                )}
              </GridRow>
            ))}
          </Grid>
        </Left>

        <Right>
          <ViewBar>
            <Dots w={5} h={17} /><Space $w={5} />
            <Tool><Magnifier><path d="M3.500 7l3-2.500v5zM6 7h4" fill={GOLD} stroke={GOLD} /></Magnifier></Tool>
            <Tool><Magnifier c="#9a9a9a"><path d="M10.500 7l-3-2.500v5zM4 7h4" fill="#aaa" stroke="#aaa" /></Magnifier></Tool>
            <Sep $w={7} />
            <Tool $on><Svg><Box3 top="#d8d8d8" left="#6e6e6e" right="#8a8a8a" stroke="#222" /></Svg></Tool>
            <Tool><Svg><Box3 top="#cfcfcf" left="#8a8a8a" right="#666" stroke="none" /></Svg></Tool>
            <Tool><Svg><Box3 top={GOLD} left={GOLD} right={GOLD} stroke="#333" x={-0.500} y={6.500} k={0.580} /><Box3 top="#fff" left="#fff" right="#ddd" stroke="#333" x={6.500} y={0} k={0.580} /><path d="M2 5q0-3 3-3M14 10q0 3-3 4" stroke="#333" /></Svg></Tool>
            <Sep $w={6} />
            <Tool><Svg><rect x="1.500" y="1.500" width="5" height="5" stroke="#aaa" /><rect x="8.500" y="8.500" width="6" height="6" stroke="#888" /><path d="M8.500 11.500h6M11.500 8.500v6" stroke="#999" /><path d="M9 3h3v3M4 9v3h3" stroke="#bbb" strokeDasharray="1 1" /></Svg></Tool>
            <Sep $w={6} />
            <Tool><Svg><path d="M2 8a6 6 0 0 1 10-4.500M14 8a6 6 0 0 1-10 4.500" stroke={INK} strokeWidth="1.300" /><path d="M11.500 2l3 1.500-2.500 2zM4.500 14l-3-1.500 2.500-2z" fill={GOLD} /><path d="M.5 8h3l-1.500 2.500zM12.500 8h3L14 5.500z" fill={GOLD} /></Svg></Tool>
            <Space $w={2} /><Down c="#717171" /><Space $w={2} />
            <Tool><Svg><path d="M8 .5l3 3.500H5zM8 15.500l3-3.500H5zM.5 8L4 5v6zM15.500 8L12 5v6z" fill={GOLD} /><path d="M6 6h4v4H6z" stroke="#444" strokeDasharray="1 1" /></Svg></Tool>
            <Tool><Magnifier><path d="M7 3.500l2.500 2.700h-5zM7 10.300l2.500-2.700h-5z" fill={GOLD} /></Magnifier></Tool>
            <Tool><Magnifier><path d="M7 4v6M4 7h6" stroke={GOLD} strokeWidth="2" /></Magnifier></Tool>
            <Tool><Magnifier><BlueBox x={2.500} y={2.200} k={0.570} /></Magnifier></Tool>
            <Tool><Magnifier><Box3 top="#bfeebf" left="#2aa83a" right="#e8f5e8" stroke="#3a5a3c" x={2.500} y={2.200} k={0.570} /></Magnifier></Tool>
            <Tool><Magnifier><path d="M7 3.500l2.500 2.300h-5zM7 10.300l2.500-2.300h-5zM5 6.400h4v1H5z" fill={GOLD} /></Magnifier></Tool>
            <Sep $w={7} />
            <BarText $w={64}>Auswählen</BarText>
            <Tool><Svg><rect x="1" y="1" width="6" height="6" fill="red" /><path d="M5 5l9 2.500-3.500 1.500L14 13l-2 1.500-3-4L7 13.500z" fill="#3a3a3a" /></Svg></Tool>
            <BarText $w={37}>Modus</BarText><Space $w={1} /><Down c="#717171" w={6} /><Space $w={9} />
            <Tool $on><Svg><path d="M1.500 7V1.500H8M1.500 3.500H6M4.500 2v5M10 1.500h5M11.500 1.500V7M1.500 15V9.500H6M4.500 9.500V15" stroke="#333" /><path d="M9 2h6v3H9zM3 10h3v2H3z" fill="#00d800" /><circle cx="5" cy="5" r="1.500" fill="#00d800" /><path d="M9 9l4 1.500-1.500.8 1.500 2.500-1 .7-1.500-2.500-1 1z" fill="#444" /></Svg></Tool>
            <Tool><SelectCube face="dot" /></Tool>
            <Tool><SelectCube face="edge" /></Tool>
            <Tool><SelectCube face="top" /></Tool>
            <Tool><SelectCube face="all" /></Tool>
            <Tool><SelectCube off /></Tool>
            <Tool><SelectCube off mesh={2} /></Tool>
            <Tool><SelectCube off mesh={3} /></Tool>
            <Tool><Svg><text x="0" y="5" fontSize="6" fill="#333" textLength="16">X,Y,Z</text><path d="M6 6l6 2-2 1 2 4-1.500 1-2-4-1.500 1.500z" fill={GOLD} /></Svg></Tool>
            <Tool><Svg><path d="M1 1.500h11l3 2.500-3 2.500H1z" fill="#fff" stroke="#222" /><text x="2.500" y="6" fontSize="5.500" fontWeight="700" fill="#222">100</text><path d="M6 7l6 2-2 1 2 4-1.500 1-2-4-1.500 1.500z" fill={GOLD} /></Svg></Tool>
            <Tool><Svg><path d="M1.500 2.500h10l3 4.500-3 4.500h-10z" fill="#ddd" stroke="#999" /><text x="2" y="9.500" fontSize="6.500" fill="#777">Abc</text><path d="M9 9l5 5" stroke="#999" strokeWidth="1.500" /></Svg></Tool>
            <Sep $w={6} />
            <Tool><Svg><path d="M1 9l4-4 3 2 6-5M1 13.500h6M9 13.500h6M1 11h3M11 11h3" stroke="#b8b8b8" strokeWidth="1.200" /></Svg></Tool>
            <Overflow>
              <Svg w={8} h={8}><path d="M1 0l3 3 3-3M1 4l3 3 3-3" stroke="#333" /></Svg>
              <Down />
            </Overflow>
          </ViewBar>
          <Viewport><Scene /></Viewport>
          <Gap />
          <PanelHead $line><HeadText $ls={0.2}>Nachrichten</HeadText><Dots /><PanelButtons c="#1e1e1e" square={false} /></PanelHead>
        </Right>
      </Work>

      <Status>
        <StatusItem $w={104} $ml={0}>Meldungen-Fenster</StatusItem>
        <StatusItem $w={77} $ml={18} $ls={-0.08}>Keine Auswahl</StatusItem>
        <Space $w={21} /><Svg w={9} h={6}><path d="M0 5h9L4.500 0z" fill="#fff" /></Svg>
        <StatusItem $w={172} $ml={6} $ls={0.1}>Metrisch (mm, kg, N, s, mV, mA)</StatusItem>
        <StatusItem $w={25} $ml={13} $ls={-0.1}>Grad</StatusItem>
        <StatusItem $w={27} $ml={12}>rad/s</StatusItem>
        <StatusItem $w={37} $ml={12}>Celsius</StatusItem>
      </Status>
      <Bottom />
    </Window>
  </Desktop>
);

export default App;
